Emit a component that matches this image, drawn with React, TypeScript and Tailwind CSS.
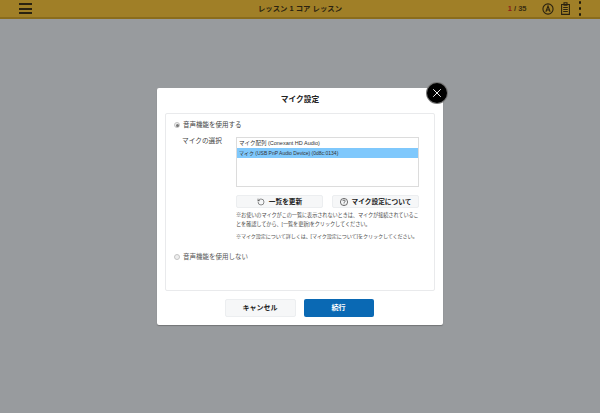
import { RotateCw, X } from 'lucide-react'

const font = { fontFamily: '"Liberation Sans", "Noto Sans CJK JP", sans-serif' }

function Radio({ on }: { on?: boolean }) {
  return (
    <span className="flex h-[6px] w-[6px] items-center justify-center rounded-full border border-[#c4c4c4] bg-[#eeeeee]">
      {on && <span className="h-[3px] w-[3px] rounded-full bg-[#777]" />}
    </span>
  )
}

export default function App() {
  return (
    <div className="relative h-[413px] w-[600px] overflow-hidden bg-[#989b9e] text-[#222]" style={font}>
      <header className="flex h-[19px] items-center justify-between border-b-2 border-[#8a6c1c] bg-[#a07f27]">
        <div className="ml-[19px] flex w-[13px] flex-col gap-[2.5px]">
          <span className="h-[2px] bg-[#2a2210]" />
          <span className="h-[2px] bg-[#2a2210]" />
          <span className="h-[2px] bg-[#2a2210]" />
        </div>
        <div className="absolute inset-x-0 top-[2px] text-center text-[7.4px] font-bold leading-[14px] text-[#2a2210]">レッスン 1 コア レッスン</div>
        <div className="flex items-center">
          <span className="mr-[15px] text-[7.5px] font-bold text-[#3a2e12]">
            <span className="text-[#8f1f1a]">1</span> / 35
          </span>
          <svg className="mr-[7px] h-[12px] w-[12px]" viewBox="0 0 13 13" fill="none" stroke="#2a2210" strokeWidth="1.2">
            <circle cx="6.5" cy="6.5" r="5.5" />
            <path d="M4.2 9.4 6.5 3.4l2.3 6M5 7.6h3" />
          </svg>
          <svg className="mr-[9px] h-[13px] w-[9px]" viewBox="0 0 9 13" fill="none" stroke="#2a2210" strokeWidth="1.1">
            <path d="M.6 2.5h7.8V12.4H.6zM3 .8h3v2.4H3zM2.2 5.5h4.6M2.2 7.5h4.6M2.2 9.5h4.6" />
          </svg>
          <div className="mr-[19px] flex flex-col gap-[3.5px]">
            <span className="h-[2.5px] w-[2.5px] rounded-full bg-[#1d170a]" />
            <span className="h-[2.5px] w-[2.5px] rounded-full bg-[#1d170a]" />
            <span className="h-[2.5px] w-[2.5px] rounded-full bg-[#1d170a]" />
          </div>
        </div>
      </header>

      <div className="absolute inset-0 flex items-center justify-center">
        <div className="relative flex h-[237px] w-[286px] flex-col rounded-[2px] bg-white px-[8px] shadow-[0_1px_1px_rgba(0,0,0,0.25)]">
          <button className="absolute right-[-4px] top-[-5px] flex h-[20px] w-[20px] items-center justify-center rounded-full bg-black text-white ring-1 ring-[#777]">
            <X size={14} strokeWidth={1.6} />
          </button>
          <h2 className="h-[25px] pt-[6px] text-center text-[7.7px] font-bold leading-[12px] text-[#222]">マイク設定</h2>

          <section className="h-[178px] rounded-[2px] border border-[#e9eaec] pl-[8px] pr-[16px]">
            <label className="mt-[6px] flex h-[10px] items-center gap-[3px] text-[6.5px] text-[#444]">
              <Radio on />
              音声機能を使用する
            </label>
            <div className="mt-[7px] flex">
              <span className="w-[62px] shrink-0 pl-[8px] text-[6.7px] leading-[8px] text-[#444]">マイクの選択</span>
              <div className="flex-1">
                <div className="h-[50px] border border-[#dcdcdc] text-[5.5px] leading-[10px] text-[#333]">
                  <div className="pl-[2px]">マイク配列 (Conexant HD Audio)</div>
                  <div className="bg-[#7fc8fc] pl-[2px] text-[5px]">マイク (USB PnP Audio Device) (0d8c:0134)</div>
                </div>
                <div className="mt-[8px] flex justify-between">
                  <button className="flex h-[13px] w-[87px] items-center justify-center gap-[4px] rounded-[2px] border border-[#eceef0] bg-[#f6f7f8] pt-[1px] text-[6.7px] font-bold text-[#222]">
                    <RotateCw size={8} strokeWidth={1.5} className="-scale-x-100" />
                    一覧を更新
                  </button>
                  <button className="flex h-[13px] w-[87px] items-center justify-center gap-[4px] rounded-[2px] border border-[#eceef0] bg-[#f6f7f8] pt-[1px] text-[6.7px] font-bold text-[#222]">
                    <svg className="h-[8px] w-[8px]" viewBox="0 0 8 8" fill="none" stroke="#333" strokeWidth="0.7">
                      <circle cx="4" cy="4" r="3.6" />
                      <path d="M2.8 3.1c0-1.5 2.4-1.5 2.4 0 0 .9-1.2.8-1.2 1.8M4 5.5v.8" />
                    </svg>
                    マイク設定について
                  </button>
                </div>
                <p className="mt-[3px] w-[183px] text-[5.2px] leading-[9px] tracking-[-0.02em] text-[#4a4a4a]">
                  ※お使いのマイクがこの一覧に表示されないときは、マイクが接続されていることを確認してから、[一覧を更新]をクリックしてください。
                </p>
                <p className="mt-[3px] whitespace-nowrap text-[5.1px] leading-[9px] tracking-[-0.02em] text-[#4a4a4a]">
                  ※マイク設定について詳しくは、[マイク設定について]をクリックしてください。
                </p>
              </div>
            </div>
            <label className="mt-[11px] flex h-[10px] items-center gap-[3px] text-[6.5px] text-[#555]">
              <Radio />
              音声機能を使用しない
            </label>
          </section>

          <div className="mt-[8px] flex justify-center gap-[8px] pr-[2px]">
            <button className="h-[18px] w-[71px] rounded-[2px] border border-[#eceef0] bg-[#f6f7f8] text-[7px] font-bold text-[#222]">キャンセル</button>
            <button className="h-[18px] w-[70px] rounded-[2px] bg-[#0a69b4] text-[7px] font-bold text-white">続行</button>
          </div>
        </div>
      </div>
    </div>
  )
}
